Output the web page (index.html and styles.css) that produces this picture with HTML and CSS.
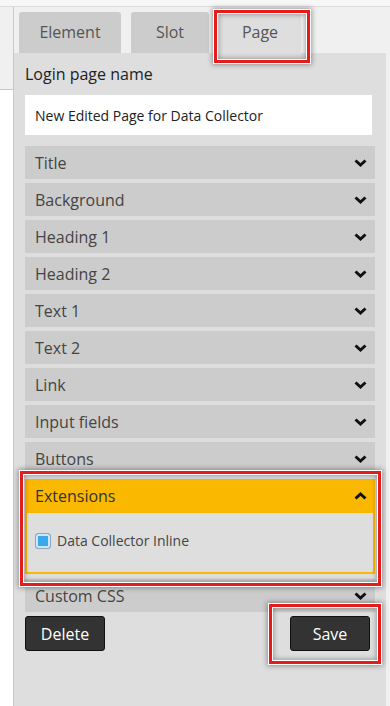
FILE: index.html
```html
<!DOCTYPE html>
<html lang="en">
<head>
    <meta charset="UTF-8">
    <meta name="viewport" content="width=device-width, initial-scale=1.0">
    <title>Page editor</title>
    <link rel="stylesheet" href="styles.css">
</head>
<body>

    <div class="topline"></div>

    <div class="app">
        <div class="sidebar">
            <div class="sidebar-top"></div>
        </div>

        <div class="editor">
            <div class="tabs">
                <div class="tab">Element</div>
                <div class="tab tab-slot">Slot</div>
                <div class="tab tab-page active">
                    Page
                    <span class="mark mark-tab"></span>
                </div>
            </div>

            <div class="panel">
                <label class="field-label" for="pageName">Login page name</label>
                <input class="field-input" id="pageName" type="text" value="New Edited Page for Data Collector">

                <div class="section">Title <svg class="chev" viewBox="0 0 13 8"><polyline points="1.5,1.5 6.5,6 11.5,1.5"/></svg></div>
                <div class="section">Background <svg class="chev" viewBox="0 0 13 8"><polyline points="1.5,1.5 6.5,6 11.5,1.5"/></svg></div>
                <div class="section">Heading 1 <svg class="chev" viewBox="0 0 13 8"><polyline points="1.5,1.5 6.5,6 11.5,1.5"/></svg></div>
                <div class="section">Heading 2 <svg class="chev" viewBox="0 0 13 8"><polyline points="1.5,1.5 6.5,6 11.5,1.5"/></svg></div>
                <div class="section">Text 1 <svg class="chev" viewBox="0 0 13 8"><polyline points="1.5,1.5 6.5,6 11.5,1.5"/></svg></div>
                <div class="section">Text 2 <svg class="chev" viewBox="0 0 13 8"><polyline points="1.5,1.5 6.5,6 11.5,1.5"/></svg></div>
                <div class="section">Link <svg class="chev" viewBox="0 0 13 8"><polyline points="1.5,1.5 6.5,6 11.5,1.5"/></svg></div>
                <div class="section">Input fields <svg class="chev" viewBox="0 0 13 8"><polyline points="1.5,1.5 6.5,6 11.5,1.5"/></svg></div>
                <div class="section">Buttons <svg class="chev" viewBox="0 0 13 8"><polyline points="1.5,1.5 6.5,6 11.5,1.5"/></svg></div>

                <div class="section-open">
                    <div class="section section-active">Extensions <svg class="chev" viewBox="0 0 13 8"><polyline points="1.5,6.5 6.5,2 11.5,6.5"/></svg></div>
                    <div class="section-body">
                        <label class="check">
                            <input type="checkbox" checked>
                            <span>Data Collector Inline</span>
                        </label>
                    </div>
                    <span class="mark mark-ext"></span>
                </div>

                <div class="section">Custom CSS <svg class="chev" viewBox="0 0 13 8"><polyline points="1.5,1.5 6.5,6 11.5,1.5"/></svg></div>

                <div class="actions">
                    <button class="btn">Delete</button>
                    <div class="save-wrap">
                        <button class="btn">Save</button>
                        <span class="mark mark-save"></span>
                    </div>
                </div>
            </div>
        </div>
    </div>

</body>
</html>
```

FILE: styles.css
```css
body {
    margin: 0;
    font-family: "Open Sans", "Noto Sans", sans-serif;
    background-color: #fff;
    height: 706px;
    overflow: hidden;
}
.topline {
    height: 6px;
    background-color: #f7f7f7;
    border-bottom: 1px solid #dcdcdc;
}
.app {
    display: flex;
    height: 699px;
}
.sidebar {
    width: 13px;
    border-right: 1px solid #c8c8c8;
}
.sidebar-top {
    height: 82px;
    background-color: #f0f0f0;
    border-bottom: 1px solid #c8c8c8;
}
.editor {
    flex: 1;
    display: flex;
    flex-direction: column;
    background-color: #f0f0f0;
    padding-right: 4px;
}
.tabs {
    display: flex;
    gap: 10px;
    padding: 5px 0 0 5px;
}
.tab {
    position: relative;
    width: 102px;
    height: 41px;
    line-height: 41px;
    text-align: center;
    font-size: 16px;
    color: #555;
    background-color: #cccccc;
    border-radius: 3px 3px 0 0;
}
.tab-slot {
    width: 78px;
}
.tab-page {
    width: 82px;
}
.tab.active {
    background-color: #dedede;
}
.panel {
    flex: 1;
    background-color: #dedede;
    padding: 11px 11px 0 11px;
}
.field-label {
    display: block;
    font-size: 16px;
    color: #222;
    line-height: 20px;
}
.field-input {
    display: block;
    box-sizing: border-box;
    width: calc(100% - 3px);
    height: 40px;
    margin: 11px 0 11px 0;
    padding: 0 10px;
    border: none;
    background-color: #fff;
    font-family: inherit;
    font-size: 14px;
    color: #222;
}
.section {
    display: flex;
    align-items: center;
    justify-content: space-between;
    height: 33px;
    margin-bottom: 4px;
    padding: 0 8px 0 10px;
    background-color: #cccccc;
    font-size: 16px;
    color: #444;
}
.chev {
    width: 13px;
    height: 8px;
    fill: none;
    stroke: #111;
    stroke-width: 3;
}
.section-open {
    position: relative;
    margin-bottom: 5px;
}
.section-active {
    margin-bottom: 0;
    height: 34px;
    background-color: #fbb800;
    color: #333;
}
.section-body {
    height: 59px;
    border: 2px solid #fbb800;
    border-top: none;
    background-color: #dedede;
    display: flex;
    align-items: center;
    padding: 0 8px;
}
.check {
    display: flex;
    align-items: center;
    gap: 6px;
    font-size: 14px;
    color: #444;
    margin-top: -4px;
}
.check input {
    appearance: none;
    box-sizing: border-box;
    width: 16px;
    height: 16px;
    margin: 0;
    border: 1px solid #8ea9bf;
    border-radius: 3px;
    background-color: #e9f3fb;
}
.check input:checked {
    background-color: #3aa9ec;
    box-shadow: inset 0 0 0 2px #cfe6f8;
}
.actions {
    display: flex;
    justify-content: space-between;
    padding-right: 5px;
    margin-top: 1px;
}
.save-wrap {
    position: relative;
}
.btn {
    width: 80px;
    height: 35px;
    background-color: #333;
    border: 1px solid #111;
    border-radius: 3px;
    color: #fff;
    font-family: inherit;
    font-size: 16px;
}
/* red highlight frames drawn over the screenshot */
.mark {
    position: absolute;
    border: 3px solid #e51c1c;
    box-shadow: 0 0 0 1px #fff, 0 0 5px 2px rgba(0, 0, 0, 0.35), inset 0 0 0 1px #fff, inset 0 0 5px 2px rgba(0, 0, 0, 0.3);
    pointer-events: none;
}
.mark-tab {
    left: -5px;
    right: -9px;
    top: -2px;
    bottom: -10px;
}
.mark-ext {
    left: -5px;
    right: -6px;
    top: -8px;
    bottom: -12px;
}
.mark-save {
    left: -21px;
    right: -11px;
    top: -12px;
    bottom: -13px;
}
```
